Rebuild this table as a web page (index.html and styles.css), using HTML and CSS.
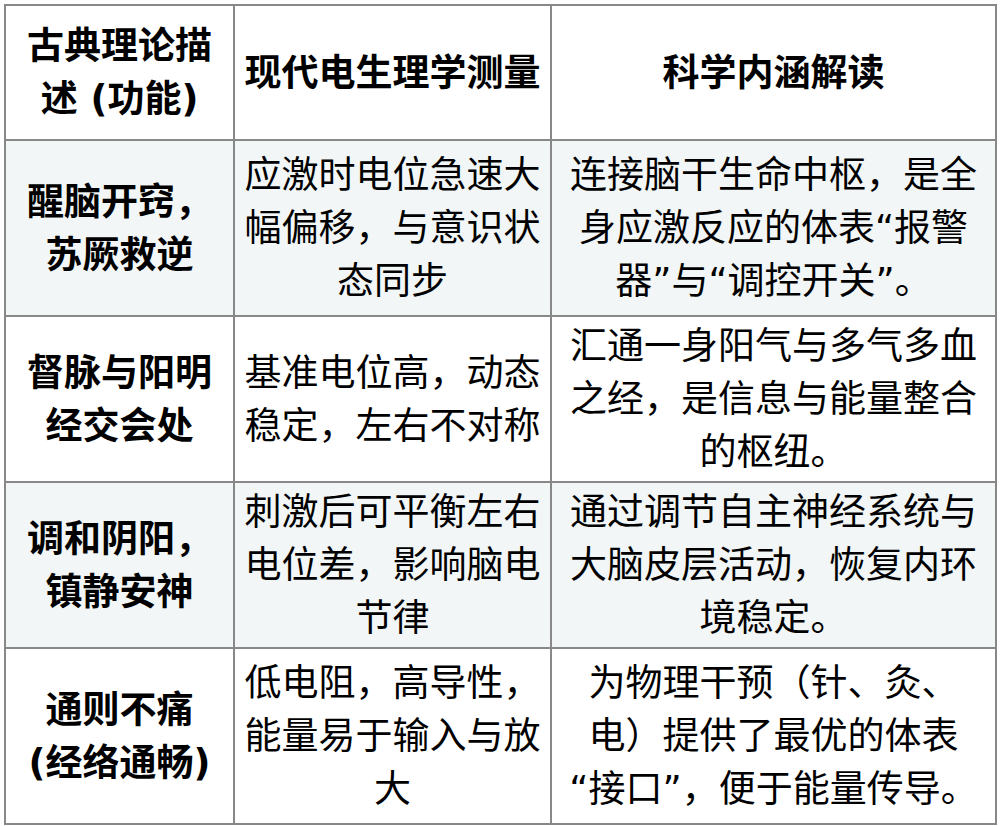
FILE: index.html
```html
<!DOCTYPE html>
<html lang="zh-CN">
<head>
<meta charset="utf-8">
<title>经络对照表</title>
<link rel="stylesheet" href="styles.css">
</head>
<body>
<table class="grid">
  <colgroup>
    <col class="c1">
    <col class="c2">
    <col class="c3">
  </colgroup>
  <thead>
    <tr class="head">
      <th>古典理论描述 (功能)</th>
      <th>现代电生理学测量</th>
      <th>科学内涵解读</th>
    </tr>
  </thead>
  <tbody>
    <tr class="alt tall">
      <th>醒脑开窍，苏厥救逆</th>
      <td>应激时电位急速大幅偏移，与意识状态同步</td>
      <td>连接脑干生命中枢，是全身应激反应的体表“报警器”与“调控开关”。</td>
    </tr>
    <tr>
      <th>督脉与阳明经交会处</th>
      <td>基准电位高，动态稳定，左右不对称</td>
      <td>汇通一身阳气与多气多血之经，是信息与能量整合的枢纽。</td>
    </tr>
    <tr class="alt">
      <th>调和阴阳，镇静安神</th>
      <td>刺激后可平衡左右电位差，影响脑电节律</td>
      <td>通过调节自主神经系统与大脑皮层活动，恢复内环境稳定。</td>
    </tr>
    <tr class="tall">
      <th>通则不痛 <span class="nowrap">(经络通畅)</span></th>
      <td>低电阻，高导性，能量易于输入与放大</td>
      <td>为物理干预（针、灸、电）提供了最优的体表“接口”，便于能量传导。</td>
    </tr>
  </tbody>
</table>
</body>
</html>
```

FILE: styles.css
```css
html, body {
  margin: 0;
  padding: 0;
  background: #ffffff;
}
body {
  padding: 4px;
  font-family: "DejaVu Sans", "Noto Sans CJK SC", sans-serif;
  color: #000;
}
.grid {
  border-collapse: collapse;
  table-layout: fixed;
  width: 991px;
  font-size: 37px;
  line-height: 53px;
  text-spacing-trim: space-all;
}
.c1 { width: 229px; }
.c2 { width: 317px; }
.c3 { width: 445px; }
.grid th,
.grid td {
  border: 2px solid #888888;
  text-align: center;
  vertical-align: middle;
  padding: 3px 9px 2px;
}
.grid td:last-child {
  padding-left: 10px;
  padding-right: 10px;
}
.grid th {
  font-weight: 700;
}
.head {
  height: 135px;
}
.tall {
  height: 176px;
}
.grid td {
  font-weight: 400;
}
.nowrap {
  white-space: nowrap;
}
.alt th,
.alt td {
  background: #f2f6f6;
}
```
